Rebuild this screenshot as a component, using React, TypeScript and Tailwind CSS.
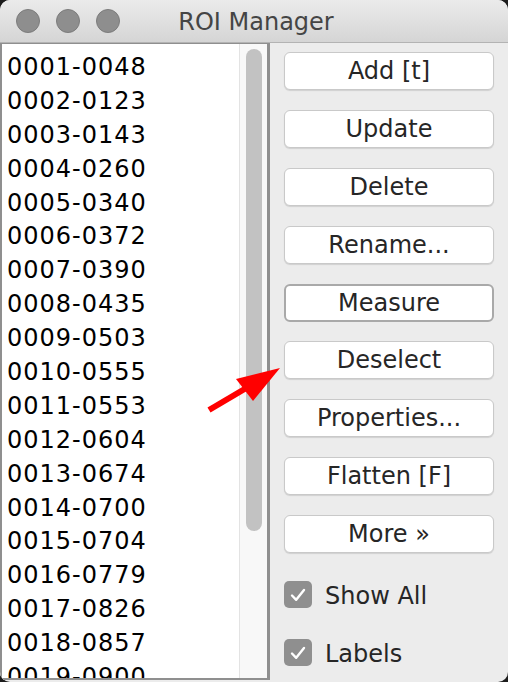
import React from 'react';

const rois = [
  '0001-0048', '0002-0123', '0003-0143', '0004-0260', '0005-0340',
  '0006-0372', '0007-0390', '0008-0435', '0009-0503', '0010-0555',
  '0011-0553', '0012-0604', '0013-0674', '0014-0700', '0015-0704',
  '0016-0779', '0017-0826', '0018-0857', '0019-0900',
];

const buttons = ['Add [t]', 'Update', 'Delete', 'Rename...', 'Measure', 'Deselect', 'Properties...', 'Flatten [F]', 'More »'];

const font = { fontFamily: '"DejaVu Sans", "Liberation Sans", sans-serif' };

const Check: React.FC<{ label: string }> = ({ label }) => (
  <div className="flex items-center h-[27px] gap-[13px]">
    <div className="w-[28px] h-[27px] rounded-[5px] bg-[#8f8f8f] flex items-center justify-center">
      <svg width="16" height="14" viewBox="0 0 16 14">
        <path d="M2 7.5 L6.2 11.8 L14 2" fill="none" stroke="#fff" strokeWidth="2.4" strokeLinecap="round" strokeLinejoin="round" />
      </svg>
    </div>
    <span className="text-[24px] text-[#262626] pt-[3px]">{label}</span>
  </div>
);

export default function App() {
  return (
    <div className="relative w-[508px] h-[682px] bg-[#1c1c1c]" style={font}>
      <div className="h-full rounded-[10px] overflow-hidden flex flex-col bg-[#ececec]">
        {/* title bar */}
        <div className="relative h-[43px] shrink-0 bg-gradient-to-b from-[#ebebeb] to-[#d5d5d5] border-b border-[#b3b3b3] flex items-center">
          <div className="flex gap-[16px] pl-[16px]">
            {[0, 1, 2].map((i) => (
              <div key={i} className="w-[24px] h-[24px] rounded-full bg-[#8e8e8e] border border-[#7c7c7c]" />
            ))}
          </div>
          <div className="absolute inset-0 flex items-center justify-center text-[24px] text-[#454545] pl-[4px] pt-[2px]">
            ROI Manager
          </div>
        </div>

        <div className="flex flex-1 min-h-0">
          {/* roi list */}
          <div className="w-[270px] h-[637px] bg-white border-l-2 border-t border-b-2 border-r-[3px] border-[#8f8f8f] flex">
            <div className="flex-1 pl-[5px] pt-[7px] overflow-hidden">
              {rois.map((r) => (
                <div key={r} className="h-[33.9px] leading-[33.9px] text-[24px] tracking-[1px] text-black whitespace-nowrap">
                  {r}
                </div>
              ))}
            </div>
            <div className="w-[28px] bg-[#f8f8f8] border-l border-[#e3e3e3] flex justify-center pt-[5px]">
              <div className="w-[16px] h-[482px] rounded-full bg-[#c2c2c2]" />
            </div>
          </div>

          {/* buttons */}
          <div className="flex-1 pl-[14px] pr-[14px] pt-[9px] flex flex-col">
            <div className="flex flex-col gap-[19.9px]">
              {buttons.map((b) => (
                <div
                  key={b}
                  className={
                    b === 'Measure'
                      ? 'w-[210px] h-[38px] rounded-[6px] bg-white border-2 border-[#a9a9a9] flex items-center justify-center text-[24px] text-[#262626]'
                      : 'w-[210px] h-[38px] rounded-[6px] bg-white border border-[#c9c9c9] shadow-[0_1px_1px_rgba(0,0,0,0.12)] flex items-center justify-center text-[24px] text-[#262626]'
                  }
                >
                  {b}
                </div>
              ))}
            </div>
            <div className="mt-[28px] flex flex-col gap-[31px]">
              <Check label="Show All" />
              <Check label="Labels" />
            </div>
          </div>
        </div>
      </div>

      {/* red annotation arrow */}
      <svg className="absolute left-0 top-0 pointer-events-none" width="508" height="682">
        <line x1="209" y1="410" x2="248" y2="387" stroke="#ff0000" strokeWidth="6" />
        <polygon points="280,368 236,379 253,401" fill="#ff0000" />
      </svg>
    </div>
  );
}
